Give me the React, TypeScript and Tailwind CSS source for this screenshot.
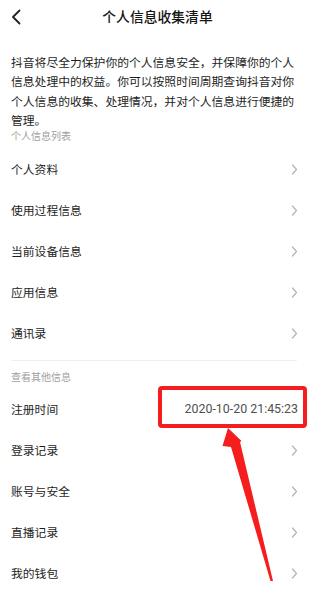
import React from "react";

const cjk = { fontFamily: '"Noto Sans CJK SC", "Noto Sans", sans-serif' };

function Chevron() {
  return (
    <svg width="7" height="11" viewBox="0 0 7 11" className="shrink-0">
      <polyline points="1.5,1 5.5,5.5 1.5,10" fill="none" stroke="#b4b4b4" strokeWidth="1.2" strokeLinecap="round" strokeLinejoin="round" />
    </svg>
  );
}

function Row({ label, right }: { label: string; right?: React.ReactNode }) {
  return (
    <div className="flex h-[41px] items-center justify-between pl-[11px] pr-[17px]">
      <span className="text-[11.8px] text-[#1e1e1e]">{label}</span>
      {right ?? <Chevron />}
    </div>
  );
}

export default function App() {
  const listA = ["个人资料", "使用过程信息", "当前设备信息", "应用信息", "通讯录"];
  const listB = ["登录记录", "账号与安全", "直播记录", "我的钱包"];
  return (
    <div className="relative h-[603px] w-[315px] overflow-hidden bg-white" style={cjk}>
      {/* header */}
      <div className="relative flex h-[32px] items-center justify-center">
        <svg width="10" height="16" viewBox="0 0 10 16" className="absolute left-[11px] top-[8.5px]">
          <polyline points="8.5,1.5 2,8 8.5,14.5" fill="none" stroke="#222" strokeWidth="1.8" strokeLinecap="round" strokeLinejoin="round" />
        </svg>
        <span className="text-[13.8px] font-medium text-[#161616]">个人信息收集清单</span>
      </div>

      {/* intro */}
      <div className="pl-[11px] pt-[20px] text-[11.8px] leading-[19.4px] text-[#1e1e1e] whitespace-nowrap">
        <div>抖音将尽全力保护你的个人信息安全，并保障你的个人</div>
        <div>信息处理中的权益。你可以按照时间周期查询抖音对你</div>
        <div>个人信息的收集、处理情况，并对个人信息进行便捷的</div>
        <div>管理。</div>
      </div>

      <div className="pl-[11px] pb-[7px] text-[10px] leading-[12px] text-[#a0a0a0]">个人信息列表</div>

      {listA.map((l) => (
        <Row key={l} label={l} />
      ))}

      <div className="ml-[11px] mr-[18px] mt-[6px] h-px bg-[#efefef]" />

      <div className="pl-[11px] pt-[10px] pb-[6px] text-[10px] leading-[12px] text-[#a0a0a0]">查看其他信息</div>

      <Row
        label="注册时间"
        right={
          <span className="text-[12.4px] text-[#505050]" style={{ fontFamily: "Roboto, 'Noto Sans', sans-serif" }}>
            2020-10-20 21:45:23
          </span>
        }
      />
      {listB.map((l) => (
        <Row key={l} label={l} />
      ))}

      {/* red highlight box */}
      <div className="absolute left-[158px] top-[386px] h-[42px] w-[149px] rounded-[4px] border-[4px] border-[#f51d1d]" />

      {/* red arrow */}
      <svg className="pointer-events-none absolute left-0 top-0" width="315" height="603" viewBox="0 0 315 603">
        <polygon points="228,428 241.5,441 240,442 273,581 270.5,581 231,447 222.5,446" fill="#f51d1d" />
      </svg>
    </div>
  );
}
